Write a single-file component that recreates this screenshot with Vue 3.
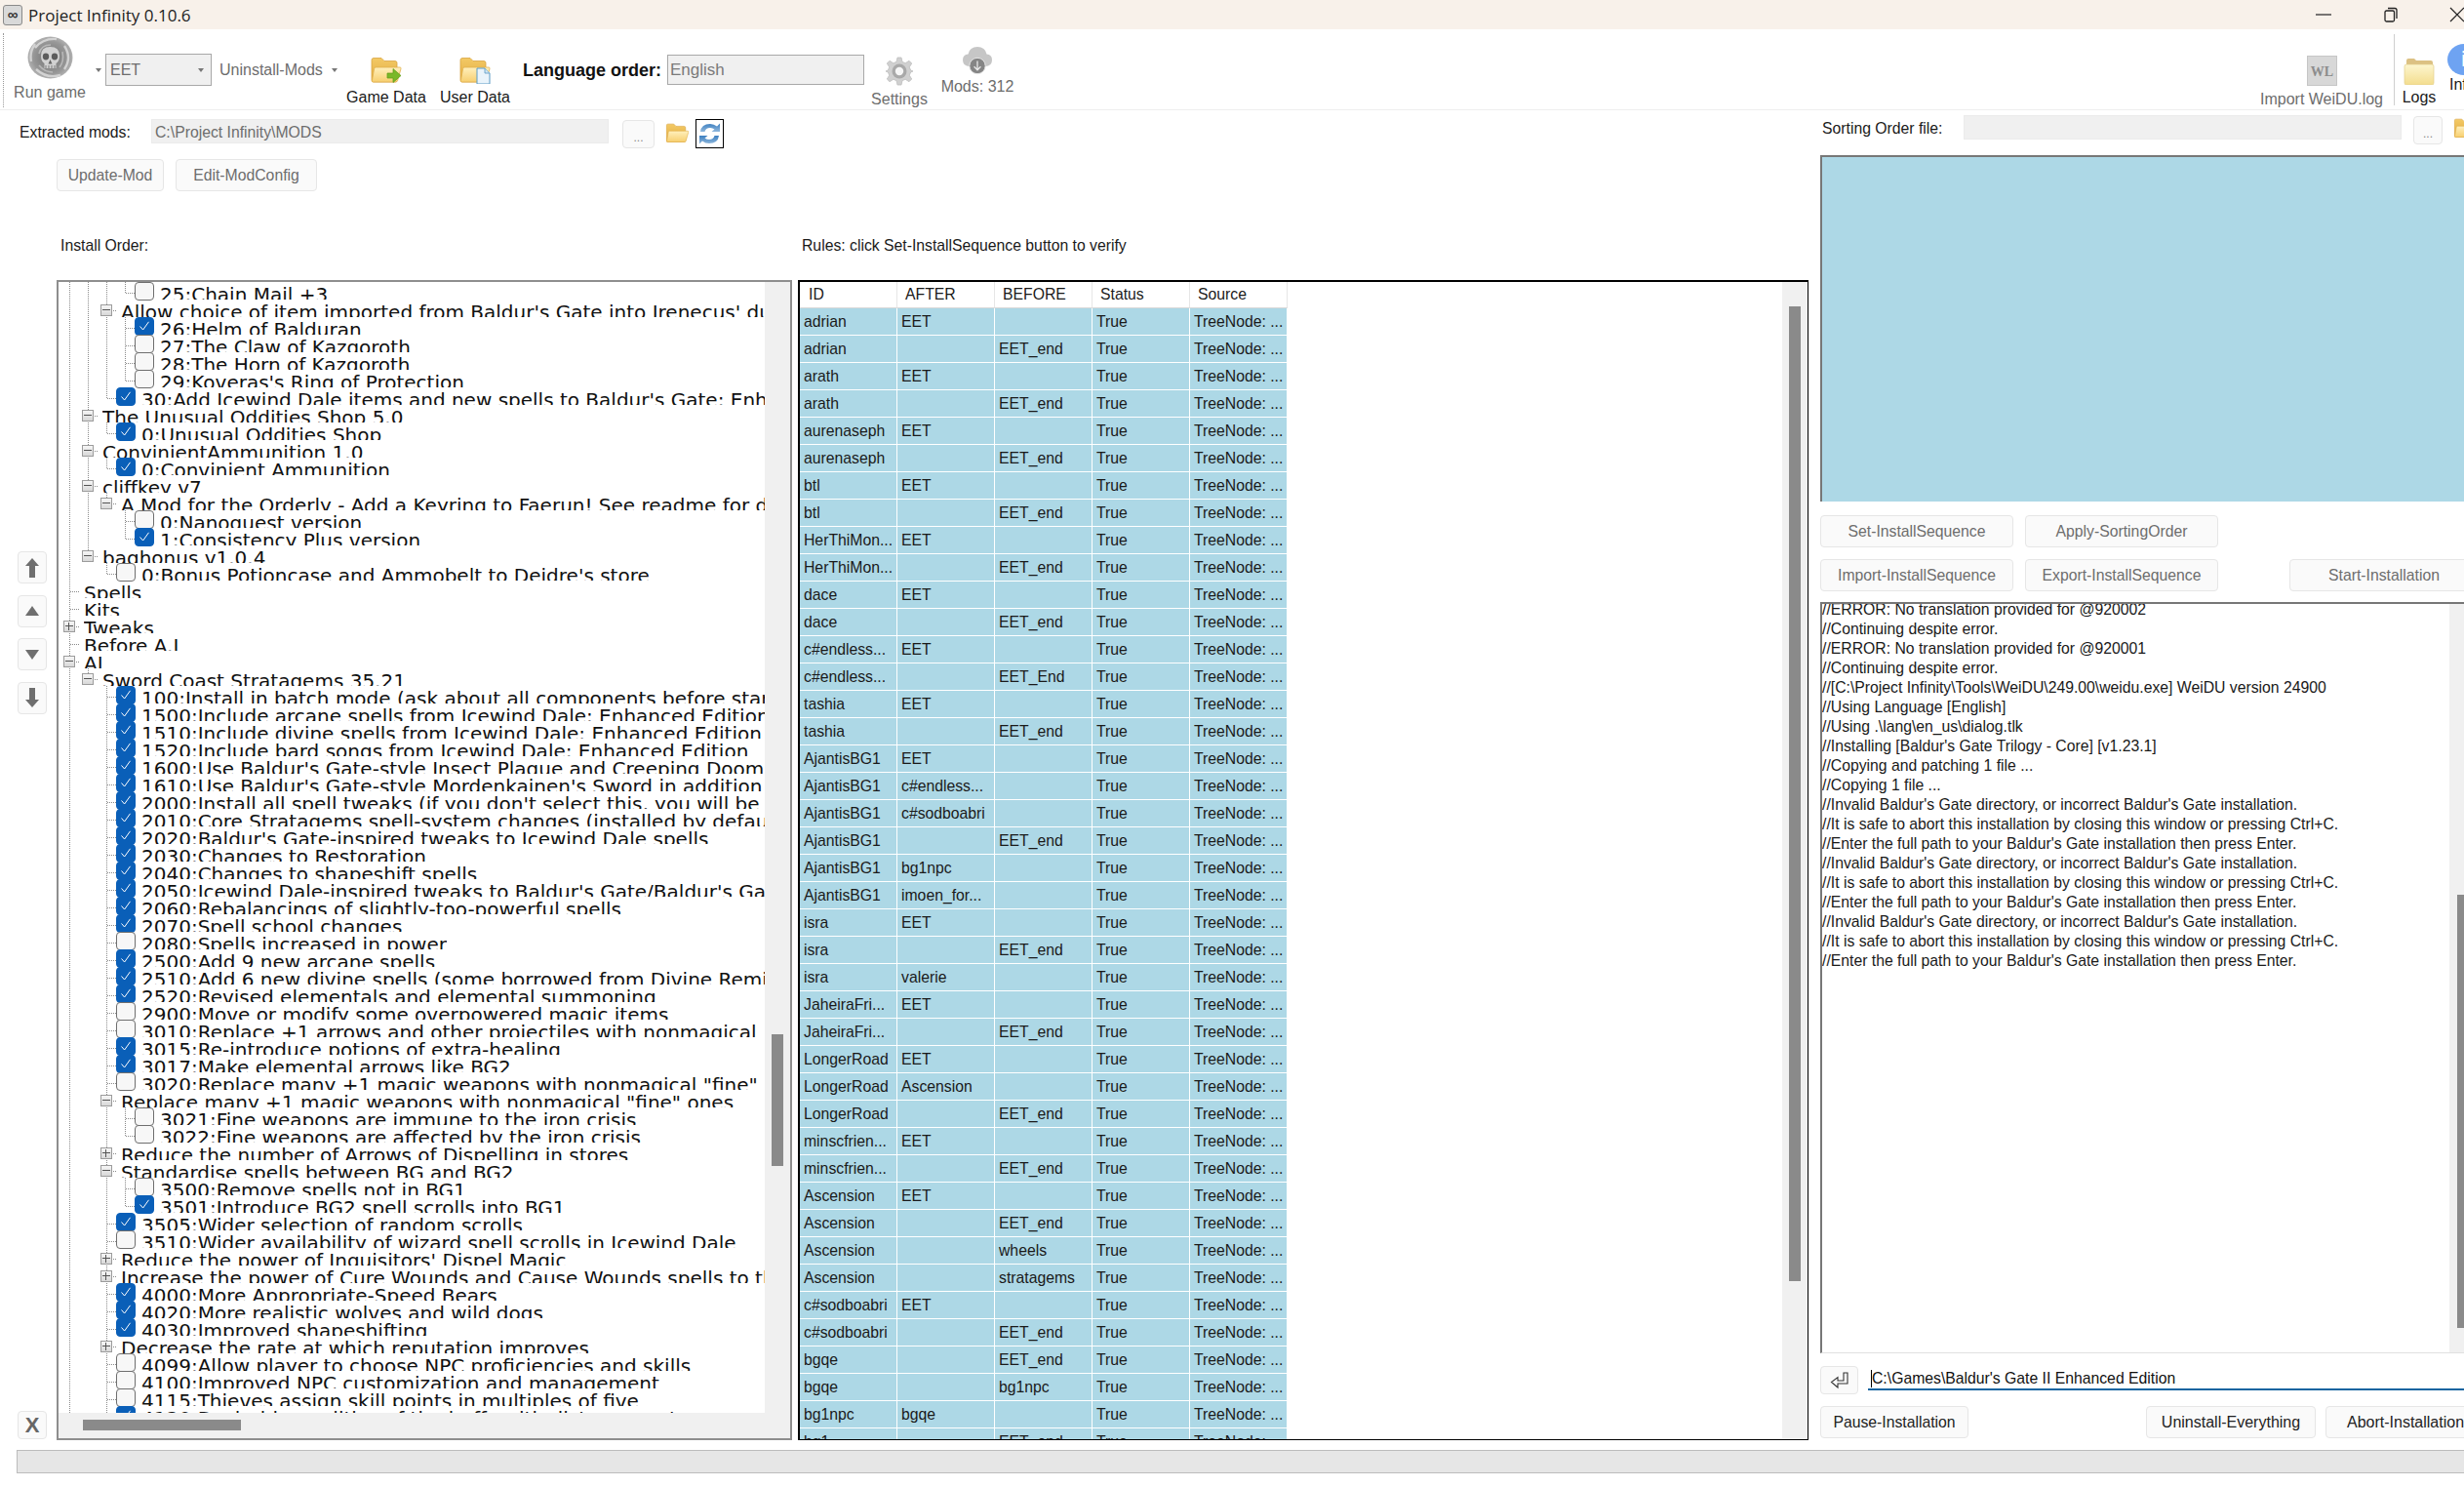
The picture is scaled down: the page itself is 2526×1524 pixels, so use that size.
<template>
  <div class="app">
    <!-- shared icon shapes -->
    <svg class="defs" width="0" height="0">
      <defs>
        <linearGradient id="folderBack" x1="0" y1="0" x2="0" y2="1">
          <stop offset="0" stop-color="#f3c965" />
          <stop offset="1" stop-color="#e2ab3f" />
        </linearGradient>
        <linearGradient id="folderFront" x1="0" y1="0" x2="0" y2="1">
          <stop offset="0" stop-color="#fff0bd" />
          <stop offset="1" stop-color="#f7cf6f" />
        </linearGradient>
        <linearGradient id="folderPale" x1="0" y1="0" x2="0" y2="1">
          <stop offset="0" stop-color="#fdf6cf" />
          <stop offset="1" stop-color="#f3dd8e" />
        </linearGradient>
        <linearGradient id="refreshBlue" x1="0" y1="0" x2="0" y2="1">
          <stop offset="0" stop-color="#3c7fc0" />
          <stop offset="1" stop-color="#8fb7dc" />
        </linearGradient>
        <radialGradient id="skullBg" cx="0.5" cy="0.5" r="0.55">
          <stop offset="0" stop-color="#6f6f6f" />
          <stop offset="0.7" stop-color="#989898" />
          <stop offset="1" stop-color="#bcbcbc" />
        </radialGradient>
        <symbol id="folder" viewBox="0 0 32 28">
          <path d="M1 3.5 Q1 1.5 3 1.5 H11 L14 4.5 H25 Q27 4.5 27 6.5 V24 Q27 26 25 26 H3 Q1 26 1 24 Z" fill="url(#folderBack)" stroke="#d9a541" stroke-width="0.8" />
          <path d="M5 11 H30 Q31.4 11 31 12.5 L27.6 24.5 Q27.2 26 25.6 26 H2.4 Q1 26 1.4 24.5 L3.6 12.5 Q3.8 11 5 11 Z" fill="url(#folderFront)" stroke="#e0b04e" stroke-width="0.8" />
        </symbol>
      </defs>
    </svg>

    <!-- title bar -->
    <div class="title-bar">
      <span class="app-icon">∞</span>
      <span class="title-text">Project Infinity 0.10.6</span>
      <div class="window-controls">
        <svg class="win-min" width="16" height="2" viewBox="0 0 16 2"><path d="M0 1 H16" stroke="#222" stroke-width="1.2" /></svg>
        <svg class="win-max" width="16" height="16" viewBox="0 0 16 16" fill="none" stroke="#222" stroke-width="1.3">
          <rect x="2" y="4" width="9.5" height="11" rx="1.5" />
          <path d="M5 1.5 H12 Q14 1.5 14 3.5 V12" />
        </svg>
        <svg class="win-close" width="16" height="16" viewBox="0 0 16 16"><path d="M1 1 L15 15 M15 1 L1 15" stroke="#222" stroke-width="1.2" /></svg>
      </div>
    </div>

    <!-- toolbar -->
    <div class="toolbar">
      <div class="grip"></div>
      <div class="tool run-game">
        <svg width="47" height="44" viewBox="0 0 47 44">
          <ellipse cx="23.5" cy="22" rx="23" ry="21.5" fill="url(#skullBg)" />
          <path d="M8 12 Q16 2 30 3 M38 10 Q46 22 38 34 M34 40 Q20 44 9 34 M4 26 Q2 16 8 8" fill="none" stroke="#d2d2d2" stroke-width="2.4" />
          <path d="M12 18 Q14 9 24 9 M36 16 Q38 26 33 32 M12 30 Q18 37 26 37" fill="none" stroke="#b8b8b8" stroke-width="1.6" />
          <path d="M14 20 Q14 11 23.5 11 Q33 11 33 20 Q33 26 29.5 28 V33 H17.5 V28 Q14 26 14 20 Z" fill="#d2d2d2" />
          <ellipse cx="19" cy="21" rx="3.2" ry="3.4" fill="#5c5c5c" />
          <ellipse cx="28" cy="21" rx="3.2" ry="3.4" fill="#5c5c5c" />
          <path d="M23.5 24 L21.5 28.5 H25.5 Z" fill="#666" />
          <path d="M19 30 V33 M22 30 V33 M25 30 V33 M28 30 V33" stroke="#7a7a7a" stroke-width="1" />
        </svg>
        <span class="tool-label dim">Run game</span>
      </div>
      <span class="caret caret-run"></span>
      <div class="combo">
        <span>EET</span>
        <span class="caret caret-combo"></span>
      </div>
      <span class="uninstall dim">Uninstall-Mods</span>
      <span class="caret caret-uninstall"></span>

      <div class="tool game-data">
        <svg width="32" height="28" viewBox="0 0 32 28">
          <use href="#folder" />
          <path d="M17 17 H23 V12.5 L31 19.5 L23 26.5 V22 H17 Z" fill="#7ab828" stroke="#5c9a16" stroke-width="0.7" />
        </svg>
        <span class="tool-label">Game Data</span>
      </div>
      <div class="tool user-data">
        <svg width="32" height="28" viewBox="0 0 32 28">
          <use href="#folder" />
          <path d="M18 12 H26 L31 17 V28 H18 Z" fill="#eaf4fb" stroke="#5b9ac4" stroke-width="1" />
          <path d="M26 12 V17 H31" fill="#cfe4f2" stroke="#5b9ac4" stroke-width="0.8" />
        </svg>
        <span class="tool-label">User Data</span>
      </div>

      <span class="lang-label">Language order:</span>
      <div class="lang-input">English</div>

      <div class="tool settings">
        <svg width="30" height="30" viewBox="0 0 30 30">
          <path d="M13 1 H17 L18 5.4 L21.2 6.7 L25 4.3 L27.7 7 L25.3 10.8 L26.6 14 L29 15 L26.6 16 L25.3 19.2 L27.7 23 L25 25.7 L21.2 23.3 L18 24.6 L17 29 H13 L12 24.6 L8.8 23.3 L5 25.7 L2.3 23 L4.7 19.2 L3.4 16 L1 15 L3.4 14 L4.7 10.8 L2.3 7 L5 4.3 L8.8 6.7 L12 5.4 Z" fill="#d0d0d0" stroke="#bdbdbd" stroke-width="0.8" />
          <circle cx="15" cy="15" r="7.5" fill="#a9a9a9" />
          <circle cx="15" cy="15" r="4.2" fill="#f6f6f6" />
        </svg>
        <span class="tool-label dim">Settings</span>
      </div>
      <div class="tool mods-count">
        <svg width="32" height="30" viewBox="0 0 32 30">
          <path d="M8 21 Q1 21 1 14.5 Q1 9 6.5 8.5 Q8 1 16 1 Q24 1 25.5 8.5 Q31 9 31 14.5 Q31 21 24 21 Z" fill="#c6c6c6" />
          <circle cx="16" cy="20.5" r="8.2" fill="#858585" stroke="#e8e8e8" stroke-width="1" />
          <path d="M16 15.5 V24.5 M12.6 21.2 L16 24.8 L19.4 21.2" fill="none" stroke="#e8e8e8" stroke-width="1.3" />
        </svg>
        <span class="tool-label dim">Mods: 312</span>
      </div>

      <div class="tool import-log">
        <svg width="31" height="31" viewBox="0 0 31 31">
          <rect x="0.5" y="0.5" width="30" height="30" fill="#d8d8d8" stroke="#c6c6c6" />
          <text x="15.5" y="21" text-anchor="middle" class="wl-text">WL</text>
        </svg>
        <span class="tool-label dim">Import WeiDU.log</span>
      </div>
      <div class="tool-sep"></div>
      <div class="tool logs">
        <svg width="32" height="28" viewBox="0 0 32 28">
          <path d="M3 6 V3 Q3 1 5 1 H11 L13 3 H28 Q30 3 30 5 V8 H3 Z" fill="#dcc183" />
          <rect x="1" y="7" width="30" height="21" rx="2" fill="url(#folderPale)" stroke="#e3cf8d" stroke-width="0.7" />
        </svg>
        <span class="tool-label solid">Logs</span>
      </div>
      <div class="tool info">
        <span class="info-dot">i</span>
        <span class="tool-label solid">Info</span>
      </div>
    </div>

    <div class="main">
      <!-- left part -->
      <div class="left">
        <div class="path-row">
          <label class="path-label">Extracted mods:</label>
          <div class="path-input">C:\Project Infinity\MODS</div>
          <button class="btn dots">...</button>
          <svg class="path-folder" width="25" height="21" viewBox="0 0 32 28"><use href="#folder" /></svg>
          <div class="refresh">
            <svg width="25" height="26" viewBox="0 0 25 26">
              <path d="M3 11 Q4 3 13 3 Q17 3 20 5.5 L23 2.5 V11 H14.5 L17.5 8.5 Q15.5 7 13 7 Q8.5 7 7.5 11 Z" fill="url(#refreshBlue)" />
              <path d="M22 15 Q21 23 12 23 Q8 23 5 20.5 L2 23.5 V15 H10.5 L7.5 17.5 Q9.5 19 12 19 Q16.5 19 17.5 15 Z" fill="url(#refreshBlue)" />
            </svg>
          </div>
        </div>

        <div class="mod-buttons">
          <button class="btn dim update-mod">Update-Mod</button>
          <button class="btn dim edit-config">Edit-ModConfig</button>
        </div>

        <div class="panel-labels">
          <span class="order-label">Install Order:</span>
          <span>Rules: click Set-InstallSequence button to verify</span>
        </div>

        <div class="panels">
          <div class="side-buttons">
            <button class="btn side">
              <svg width="16" height="22" viewBox="0 0 16 22"><path d="M8 1 L15 9 H11 V21 H5 V9 H1 Z" fill="#6f6f6f" /></svg>
            </button>
            <button class="btn side">
              <svg width="16" height="12" viewBox="0 0 16 12"><path d="M8 1 L15 11 H1 Z" fill="#6f6f6f" /></svg>
            </button>
            <button class="btn side">
              <svg width="16" height="12" viewBox="0 0 16 12"><path d="M8 11 L15 1 H1 Z" fill="#6f6f6f" /></svg>
            </button>
            <button class="btn side">
              <svg width="16" height="22" viewBox="0 0 16 22"><path d="M8 21 L15 13 H11 V1 H5 V13 H1 Z" fill="#6f6f6f" /></svg>
            </button>
            <button class="btn side clear">X</button>
          </div>

          <!-- install order tree -->
          <div class="tree-panel">
            <div class="tree-view">
              <div v-for="(row, i) in treeRows" :key="i" class="tree-row">
                <span
                  v-for="(on, c) in row.guides"
                  :key="c"
                  class="indent"
                  :class="{ 'indent--line': on }"
                ></span>
                <span class="node" :class="{ 'node--more': row.more, 'node--open': row.box }">
                  <span v-if="row.box" class="expander" :class="{ 'expander--plus': row.box === '+' }"></span>
                </span>
                <span v-if="row.check !== null" class="check" :class="{ 'check--on': row.check }">
                  <svg v-if="row.check" width="12" height="12" viewBox="0 0 12 12"><path d="M1.5 6.5 L4.6 10 L10.5 1.8" fill="none" stroke="#fff" stroke-width="1" /></svg>
                </span>
                <span class="node-text" :class="{ 'node-text--check': row.check !== null }">{{ row.text }}</span>
              </div>
            </div>
            <div class="scroll-v tree-scroll"><div class="thumb-v"></div></div>
            <div class="scroll-h"><div class="thumb-h"></div></div>
            <div class="scroll-corner"></div>
          </div>

          <!-- rules table -->
          <div class="rules-panel">
            <div class="rules-view">
              <table class="rules-table">
                <thead>
                  <tr>
                    <th v-for="h in ruleHeaders" :key="h">{{ h }}</th>
                  </tr>
                </thead>
                <tbody>
                  <tr v-for="(r, i) in ruleRows" :key="i">
                    <td>{{ r[0] }}</td>
                    <td>{{ r[1] }}</td>
                    <td>{{ r[2] }}</td>
                    <td>True</td>
                    <td>TreeNode: ...</td>
                  </tr>
                </tbody>
              </table>
            </div>
            <div class="scroll-v rules-scroll"><div class="thumb-v"></div></div>
          </div>
        </div>
      </div>

      <!-- right part -->
      <div class="right">
        <div class="sort-row">
          <label class="sort-label">Sorting Order file:</label>
          <div class="sort-input"></div>
          <button class="btn dots">...</button>
          <svg class="sort-folder" width="25" height="21" viewBox="0 0 32 28"><use href="#folder" /></svg>
        </div>

        <div class="preview"></div>

        <div class="seq-row">
          <button class="btn dim seq">Set-InstallSequence</button>
          <button class="btn dim seq">Apply-SortingOrder</button>
        </div>
        <div class="seq-row seq-row--second">
          <button class="btn dim seq">Import-InstallSequence</button>
          <button class="btn dim seq">Export-InstallSequence</button>
          <button class="btn dim seq start">Start-Installation</button>
        </div>

        <div class="log-box">
          <div class="log-view">
            <div v-for="(line, i) in logLines" :key="i" class="log-line">{{ line }}</div>
          </div>
          <div class="scroll-v log-scroll"><div class="thumb-v"></div></div>
        </div>

        <div class="input-row">
          <button class="btn enter">
            <svg width="20" height="20" viewBox="0 0 20 20">
              <path d="M14 2 H18 V13 H8 V17 L1.5 11.5 L8 6.5 V10 H14 Z" fill="none" stroke="#333" stroke-width="1.1" />
            </svg>
          </button>
          <div class="console-input"><span class="text-caret"></span>C:\Games\Baldur's Gate II Enhanced Edition</div>
        </div>

        <div class="action-row">
          <button class="btn pause">Pause-Installation</button>
          <button class="btn wide uninstall-all">Uninstall-Everything</button>
          <button class="btn wide abort">Abort-Installation</button>
        </div>
      </div>
    </div>

    <div class="status-bar"></div>
  </div>
</template>

<script setup>
import { computed } from 'vue'

// level, box ('+', '-', ''), check (true, false, null), text
const treeData = [
  [3, '', false, '25:Chain Mail +3'],
  [2, '-', null, "Allow choice of item imported from Baldur's Gate into Irenecus' dungeon"],
  [3, '', true, '26:Helm of Balduran'],
  [3, '', false, '27:The Claw of Kazgoroth'],
  [3, '', false, '28:The Horn of Kazgoroth'],
  [3, '', false, "29:Koveras's Ring of Protection"],
  [2, '', true, "30:Add Icewind Dale items and new spells to Baldur's Gate: Enhanced Edition"],
  [1, '-', null, 'The Unusual Oddities Shop 5.0'],
  [2, '', true, '0:Unusual Oddities Shop'],
  [1, '-', null, 'ConvinientAmmunition 1.0'],
  [2, '', true, '0:Convinient Ammunition'],
  [1, '-', null, 'cliffkey v7'],
  [2, '-', null, 'A Mod for the Orderly - Add a Keyring to Faerun! See readme for details'],
  [3, '', false, '0:Nanoquest version'],
  [3, '', true, '1:Consistency Plus version'],
  [1, '-', null, 'baghonus v1.0.4'],
  [2, '', false, "0:Bonus Potioncase and Ammobelt to Deidre's store"],
  [0, '', null, 'Spells'],
  [0, '', null, 'Kits'],
  [0, '+', null, 'Tweaks'],
  [0, '', null, 'Before A.I'],
  [0, '-', null, 'AI'],
  [1, '-', null, 'Sword Coast Stratagems 35.21'],
  [2, '', true, '100:Install in batch mode (ask about all components before starting)'],
  [2, '', true, '1500:Include arcane spells from Icewind Dale: Enhanced Edition'],
  [2, '', true, '1510:Include divine spells from Icewind Dale: Enhanced Edition'],
  [2, '', true, '1520:Include bard songs from Icewind Dale: Enhanced Edition'],
  [2, '', true, "1600:Use Baldur's Gate-style Insect Plague and Creeping Doom"],
  [2, '', true, "1610:Use Baldur's Gate-style Mordenkainen's Sword in addition"],
  [2, '', true, "2000:Install all spell tweaks (if you don't select this, you will be asked"],
  [2, '', true, '2010:Core Stratagems spell-system changes (installed by default)'],
  [2, '', true, "2020:Baldur's Gate-inspired tweaks to Icewind Dale spells"],
  [2, '', true, '2030:Changes to Restoration'],
  [2, '', true, '2040:Changes to shapeshift spells'],
  [2, '', true, "2050:Icewind Dale-inspired tweaks to Baldur's Gate/Baldur's Gate II spells"],
  [2, '', true, '2060:Rebalancings of slightly-too-powerful spells'],
  [2, '', true, '2070:Spell school changes'],
  [2, '', false, '2080:Spells increased in power'],
  [2, '', true, '2500:Add 9 new arcane spells'],
  [2, '', true, '2510:Add 6 new divine spells (some borrowed from Divine Remix)'],
  [2, '', true, '2520:Revised elementals and elemental summoning'],
  [2, '', false, '2900:Move or modify some overpowered magic items'],
  [2, '', false, '3010:Replace +1 arrows and other projectiles with nonmagical'],
  [2, '', true, '3015:Re-introduce potions of extra-healing'],
  [2, '', true, '3017:Make elemental arrows like BG2'],
  [2, '', false, '3020:Replace many +1 magic weapons with nonmagical "fine"'],
  [2, '-', null, 'Replace many +1 magic weapons with nonmagical "fine" ones'],
  [3, '', false, '3021:Fine weapons are immune to the iron crisis'],
  [3, '', false, '3022:Fine weapons are affected by the iron crisis'],
  [2, '+', null, 'Reduce the number of Arrows of Dispelling in stores'],
  [2, '-', null, 'Standardise spells between BG and BG2'],
  [3, '', false, '3500:Remove spells not in BG1'],
  [3, '', true, '3501:Introduce BG2 spell scrolls into BG1'],
  [2, '', true, '3505:Wider selection of random scrolls'],
  [2, '', false, '3510:Wider availability of wizard spell scrolls in Icewind Dale'],
  [2, '+', null, "Reduce the power of Inquisitors' Dispel Magic"],
  [2, '+', null, 'Increase the power of Cure Wounds and Cause Wounds spells to the'],
  [2, '', true, '4000:More Appropriate-Speed Bears'],
  [2, '', true, '4020:More realistic wolves and wild dogs'],
  [2, '', true, '4030:Improved shapeshifting'],
  [2, '+', null, 'Decrease the rate at which reputation improves'],
  [2, '', false, '4099:Allow player to choose NPC proficiencies and skills'],
  [2, '', false, '4100:Improved NPC customization and management'],
  [2, '', false, '4115:Thieves assign skill points in multiples of five'],
  [2, '', true, '4120:Desirable qualities of the buffs with distance restr'],
  [2, '', false, '4130:More sensible NPC'],
  [0, '', null, 'After A.I']
]

// a column keeps its dotted line while a later sibling is still to come
const hasSiblingBelow = (index, level) => {
  for (let j = index + 1; j < treeData.length; j++) {
    if (treeData[j][0] <= level) return treeData[j][0] === level
  }
  return false
}

const treeRows = computed(() => treeData.map((row, i) => {
  const [level, box, check, text] = row
  const guides = []
  for (let c = 0; c < level; c++) guides.push(hasSiblingBelow(i, c))
  return { level, box, check, text, guides, more: hasSiblingBelow(i, level) }
}))

const ruleHeaders = ['ID', 'AFTER', 'BEFORE', 'Status', 'Source']

const ruleRows = [
  ['adrian', 'EET', ''],
  ['adrian', '', 'EET_end'],
  ['arath', 'EET', ''],
  ['arath', '', 'EET_end'],
  ['aurenaseph', 'EET', ''],
  ['aurenaseph', '', 'EET_end'],
  ['btl', 'EET', ''],
  ['btl', '', 'EET_end'],
  ['HerThiMon...', 'EET', ''],
  ['HerThiMon...', '', 'EET_end'],
  ['dace', 'EET', ''],
  ['dace', '', 'EET_end'],
  ['c#endless...', 'EET', ''],
  ['c#endless...', '', 'EET_End'],
  ['tashia', 'EET', ''],
  ['tashia', '', 'EET_end'],
  ['AjantisBG1', 'EET', ''],
  ['AjantisBG1', 'c#endless...', ''],
  ['AjantisBG1', 'c#sodboabri', ''],
  ['AjantisBG1', '', 'EET_end'],
  ['AjantisBG1', 'bg1npc', ''],
  ['AjantisBG1', 'imoen_for...', ''],
  ['isra', 'EET', ''],
  ['isra', '', 'EET_end'],
  ['isra', 'valerie', ''],
  ['JaheiraFri...', 'EET', ''],
  ['JaheiraFri...', '', 'EET_end'],
  ['LongerRoad', 'EET', ''],
  ['LongerRoad', 'Ascension', ''],
  ['LongerRoad', '', 'EET_end'],
  ['minscfrien...', 'EET', ''],
  ['minscfrien...', '', 'EET_end'],
  ['Ascension', 'EET', ''],
  ['Ascension', '', 'EET_end'],
  ['Ascension', '', 'wheels'],
  ['Ascension', '', 'stratagems'],
  ['c#sodboabri', 'EET', ''],
  ['c#sodboabri', '', 'EET_end'],
  ['bgqe', '', 'EET_end'],
  ['bgqe', '', 'bg1npc'],
  ['bg1npc', 'bgqe', ''],
  ['bg1', '', 'EET_end']
]

const logLines = [
  '//ERROR: No translation provided for @920002',
  '//Continuing despite error.',
  '//ERROR: No translation provided for @920001',
  '//Continuing despite error.',
  '//[C:\\Project Infinity\\Tools\\WeiDU\\249.00\\weidu.exe] WeiDU version 24900',
  '//Using Language [English]',
  '//Using .\\lang\\en_us\\dialog.tlk',
  "//Installing [Baldur's Gate Trilogy - Core] [v1.23.1]",
  '//Copying and patching 1 file ...',
  '//Copying 1 file ...',
  "//Invalid Baldur's Gate directory, or incorrect Baldur's Gate installation.",
  '//It is safe to abort this installation by closing this window or pressing Ctrl+C.',
  "//Enter the full path to your Baldur's Gate installation then press Enter.",
  "//Invalid Baldur's Gate directory, or incorrect Baldur's Gate installation.",
  '//It is safe to abort this installation by closing this window or pressing Ctrl+C.',
  "//Enter the full path to your Baldur's Gate installation then press Enter.",
  "//Invalid Baldur's Gate directory, or incorrect Baldur's Gate installation.",
  '//It is safe to abort this installation by closing this window or pressing Ctrl+C.',
  "//Enter the full path to your Baldur's Gate installation then press Enter."
]
</script>

<style>
html, body {
  margin: 0;
  background: #fff;
}
</style>

<style scoped>
.app {
  width: 2526px;
  height: 1524px;
  overflow: hidden;
  display: flex;
  flex-direction: column;
  background: #fff;
  color: #1a1a1a;
  font-family: 'Liberation Sans', Arial, sans-serif;
  font-size: 15.75px;
}

.defs {
  position: absolute;
}

.dim {
  color: #6d6d6d;
}

/* title bar */
.title-bar {
  height: 30px;
  flex-shrink: 0;
  display: flex;
  align-items: center;
  background: #f8f1ea;
}

.app-icon {
  width: 18px;
  height: 19px;
  margin-left: 3px;
  border: 1px solid #8a8a8a;
  border-radius: 3px;
  background: #d9d9d9;
  color: #333;
  font-size: 15px;
  line-height: 18px;
  text-align: center;
  font-weight: bold;
}

.title-text {
  margin-left: 6px;
  font-family: 'Open Sans', sans-serif;
  font-size: 17px;
  color: #222;
}

.window-controls {
  margin-left: auto;
  display: flex;
  align-items: center;
}

.win-min {
  margin-right: 53px;
}

.win-max {
  margin-right: 52px;
}

.win-close {
  margin-right: -1px;
}

/* toolbar */
.toolbar {
  height: 82px;
  flex-shrink: 0;
  display: flex;
  align-items: flex-start;
  border-bottom: 1px solid #eeeeee;
  white-space: nowrap;
  font-size: 16px;
}

.toolbar > * {
  flex-shrink: 0;
}

.grip {
  height: 76px;
  margin: 4px 0 0 3px;
  border-left: 1px dotted #999;
}

.tool {
  display: flex;
  flex-direction: column;
  align-items: center;
}

.tool-label {
  line-height: 20px;
}

.tool-label.solid {
  color: #1a1a1a;
}

.run-game {
  width: 60px;
  margin: 7px 0 0 17px;
}

.run-game .tool-label {
  margin-top: 4px;
}

.caret {
  width: 0;
  height: 0;
  border-left: 3px solid transparent;
  border-right: 3px solid transparent;
  border-top: 4px solid #777;
}

.caret-run {
  margin: 40px 0 0 17px;
}

.combo {
  width: 109px;
  height: 33px;
  margin: 25px 0 0 4px;
  box-sizing: border-box;
  padding-left: 4px;
  display: flex;
  align-items: center;
  justify-content: space-between;
  background: #f0f0f0;
  border: 1px solid #a8a8a8;
  color: #6d6d6d;
}

.caret-combo {
  margin-right: 7px;
}

.uninstall {
  width: 105px;
  margin: 32px 0 0 8px;
  line-height: 20px;
}

.caret-uninstall {
  margin: 40px 0 0 10px;
}

.game-data {
  width: 84px;
  margin: 28px 0 0 8px;
}

.game-data .tool-label,
.user-data .tool-label,
.settings .tool-label,
.import-log .tool-label,
.logs .tool-label {
  margin-top: 4px;
}

.user-data {
  width: 76px;
  margin: 28px 0 0 11px;
}

.lang-label {
  width: 140px;
  margin: 31px 0 0 11px;
  font-weight: bold;
  font-size: 18px;
  line-height: 22px;
  color: #111;
}

.lang-input {
  width: 202px;
  height: 31px;
  margin: 26px 0 0 8px;
  box-sizing: border-box;
  padding-left: 2px;
  background: #f0f0f0;
  border: 1px solid #a8a8a8;
  color: #7a7a7a;
  font-size: 17px;
  line-height: 29px;
}

.settings {
  width: 64px;
  margin: 28px 0 0 4px;
}

.mods-count {
  width: 76px;
  margin: 17px 0 0 10px;
}

.mods-count .tool-label {
  margin-top: 2px;
}

.import-log {
  width: 130px;
  margin: 27px 0 0 1275px;
}

.wl-text {
  font-family: 'Liberation Serif', serif;
  font-weight: bold;
  font-size: 14px;
  fill: #8c8c8c;
}

.tool-sep {
  width: 1px;
  height: 73px;
  margin: 5px 0 0 9px;
  background: #cfcfcf;
}

.logs {
  width: 44px;
  margin: 29px 0 0 3px;
}

.logs .tool-label {
  margin-top: 3px;
}

.info {
  width: 34px;
  margin: 15px 0 0 7px;
  align-items: flex-start;
}

.info-dot {
  width: 34px;
  height: 32px;
  border-radius: 50%;
  background: #6ea3f2;
  color: #fff;
  font-size: 22px;
  line-height: 32px;
  text-align: center;
  font-weight: bold;
}

.info .tool-label {
  margin: 0 0 0 2px;
}

/* main */
.main {
  height: 1363px;
  flex-shrink: 0;
  display: flex;
}

.left {
  width: 1866px;
  flex-shrink: 0;
}

.right {
  width: 660px;
  flex-shrink: 0;
}

.btn {
  box-sizing: border-box;
  height: 33px;
  padding: 0;
  flex-shrink: 0;
  background: #fafafa;
  border: 1px solid #e6e6e6;
  border-radius: 4px;
  font-family: inherit;
  font-size: 15.75px;
  color: #222;
  text-align: center;
}

.btn.dim {
  color: #6d6d6d;
}

.dots {
  width: 33px;
  height: 29px;
  padding-top: 6px;
  font-size: 12px;
  color: #888;
}

.path-row {
  height: 30px;
  margin-top: 9px;
  padding-left: 20px;
  display: flex;
  align-items: flex-start;
}

.path-label {
  width: 135px;
  line-height: 27px;
  color: #1a1a1a;
}

.path-input {
  width: 469px;
  height: 25px;
  padding-left: 3px;
  box-sizing: border-box;
  background: #f0f0f0;
  color: #6d6d6d;
  line-height: 25px;
  border: 1px solid #ebebeb;
}

.path-row .dots {
  margin: 1px 0 0 14px;
}

.path-folder {
  margin: 4px 0 0 11px;
}

.refresh {
  width: 29px;
  height: 30px;
  margin-left: 6px;
  box-sizing: border-box;
  display: flex;
  align-items: center;
  justify-content: center;
  border: 1px solid #000;
}

.mod-buttons {
  margin-top: 11px;
  padding-left: 58px;
  display: flex;
  gap: 12px;
}

.update-mod {
  width: 110px;
}

.edit-config {
  width: 145px;
}

.panel-labels {
  height: 20px;
  margin-top: 46px;
  display: flex;
  line-height: 20px;
  padding-left: 62px;
}

.order-label {
  width: 760px;
}

.panels {
  height: 1189px;
  margin-top: 25px;
  padding-left: 18px;
  display: flex;
}

.side-buttons {
  width: 30px;
  padding-top: 278px;
  display: flex;
  flex-direction: column;
  gap: 11.5px;
  box-sizing: border-box;
}

.side {
  width: 30px;
  display: flex;
  align-items: center;
  justify-content: center;
}

.clear {
  height: 29px;
  margin-top: auto;
  margin-bottom: 1px;
  font-size: 22px;
  font-weight: bold;
  color: #666;
}

/* tree */
.tree-panel {
  width: 754px;
  margin-left: 10px;
  box-sizing: border-box;
  border: 2px solid #8e8e8e;
  display: grid;
  grid-template-columns: 1fr 26px;
  grid-template-rows: 1fr 26px;
  min-height: 0;
}

.tree-view {
  padding-left: 2px;
  overflow: hidden;
  min-width: 0;
  min-height: 0;
  font-family: 'DejaVu Sans', sans-serif;
  font-size: 20px;
  color: #111;
}

.tree-row {
  height: 18px;
  display: flex;
  white-space: nowrap;
}

.indent {
  width: 19px;
  flex-shrink: 0;
  box-sizing: border-box;
}

.indent--line {
  background: linear-gradient(#8a8a8a 50%, transparent 50%) 9px 0 / 1px 2px repeat-y;
}

.node {
  width: 19px;
  height: 18px;
  flex-shrink: 0;
  position: relative;
}

.node::before {
  content: '';
  position: absolute;
  left: 9px;
  top: 0;
  width: 1px;
  height: 11px;
  background: linear-gradient(#8a8a8a 50%, transparent 50%) 0 0 / 1px 2px repeat-y;
}

.node--more::before {
  height: 18px;
}

.node::after {
  content: '';
  position: absolute;
  left: 10px;
  top: 11px;
  width: 9px;
  height: 1px;
  background: linear-gradient(90deg, #8a8a8a 50%, transparent 50%) 0 0 / 2px 1px repeat-x;
}

.expander {
  position: absolute;
  left: 3px;
  top: 5px;
  width: 12px;
  height: 12px;
  box-sizing: border-box;
  z-index: 1;
  border: 1px solid #9c9c9c;
  background: linear-gradient(#f6f6f6, #d8d8d8);
}

.expander::before {
  content: '';
  position: absolute;
  left: 1px;
  right: 1px;
  top: 4px;
  height: 1px;
  background: #555;
}

.expander--plus::after {
  content: '';
  position: absolute;
  top: 1px;
  bottom: 1px;
  left: 4px;
  width: 1px;
  background: #555;
}

.check {
  width: 20px;
  height: 19px;
  flex-shrink: 0;
  box-sizing: border-box;
  position: relative;
  z-index: 1;
  display: flex;
  align-items: flex-start;
  justify-content: center;
  padding-top: 2px;
  background: #f7f7f7;
  border: 1px solid #6f6f6f;
  border-radius: 4px;
}

.check--on {
  background: #0a5fb8;
  border-color: #0a5fb8;
}

.node-text {
  display: block;
  height: 18px;
  margin-left: 5px;
  overflow: hidden;
  line-height: 27px;
}

.node-text--check {
  margin-left: 6px;
}

/* scrollbars */
.scroll-v {
  background: #f0f0f0;
  min-height: 0;
}

.thumb-v {
  width: 12px;
  background: #8a8a8a;
}

.tree-scroll .thumb-v {
  height: 135px;
  margin: 771px 0 0 7px;
}

.scroll-h {
  background: #f0f0f0;
  padding: 7px 0 0 25px;
}

.thumb-h {
  width: 162px;
  height: 11px;
  background: #8a8a8a;
}

.scroll-corner {
  background: #f0f0f0;
}

/* rules */
.rules-panel {
  width: 1036px;
  margin-left: 6px;
  box-sizing: border-box;
  border: 1px solid #000;
  border-top-width: 2px;
  border-left-width: 2px;
  display: flex;
  min-height: 0;
}

.rules-view {
  flex: 1;
  min-width: 0;
  overflow: hidden;
}

.rules-table {
  border-collapse: separate;
  border-spacing: 0;
  table-layout: fixed;
  width: 500px;
  color: #1a1a1a;
}

.rules-table th {
  height: 27px;
  box-sizing: border-box;
  padding: 0 0 0 8px;
  background: #fff;
  border-right: 1px solid #e6e6e6;
  border-bottom: 1px solid #d8d8d8;
  text-align: left;
  font-weight: normal;
  font-size: 15.75px;
  width: 100px;
}

.rules-table th:first-child {
  padding-left: 9px;
}

.rules-table td {
  height: 28px;
  box-sizing: border-box;
  padding: 0 0 0 4px;
  background: #add8e6;
  border-right: 1px solid #fff;
  border-bottom: 1px solid #fff;
  white-space: nowrap;
  overflow: hidden;
}

.rules-scroll {
  width: 26px;
  flex-shrink: 0;
}

.rules-scroll .thumb-v {
  height: 999px;
  margin: 25px 0 0 7px;
}

/* right side */
.sort-row {
  height: 29px;
  margin-top: 5px;
  padding-left: 2px;
  display: flex;
  align-items: flex-start;
}

.sort-label {
  width: 145px;
  line-height: 27px;
  flex-shrink: 0;
}

.sort-input {
  width: 449px;
  height: 25px;
  flex-shrink: 0;
  box-sizing: border-box;
  background: #f0f0f0;
  border: 1px solid #ebebeb;
}

.sort-row .dots {
  width: 30px;
  margin: 1px 0 0 12px;
}

.sort-folder {
  margin: 3px 0 0 11px;
  flex-shrink: 0;
}

.preview {
  height: 355px;
  margin-top: 12px;
  box-sizing: border-box;
  background: #add8e6;
  border-top: 2px solid #777;
  border-left: 2px solid #777;
}

.seq-row {
  margin-top: 14px;
  display: flex;
  gap: 12px;
}

.seq-row--second {
  margin-top: 12px;
}

.seq {
  width: 198px;
}

.start {
  margin-left: 61px;
  width: 194px;
}

.log-box {
  height: 770px;
  margin-top: 11px;
  box-sizing: border-box;
  display: flex;
  border-top: 2px solid #777;
  border-left: 2px solid #777;
  border-bottom: 1px solid #e0e0e0;
  overflow: hidden;
}

.log-view {
  flex: 1;
  min-width: 0;
  margin-top: -4px;
  white-space: nowrap;
}

.log-line {
  height: 20px;
  line-height: 20px;
}

.log-scroll {
  width: 15px;
  flex-shrink: 0;
}

.log-scroll .thumb-v {
  width: 7px;
  height: 444px;
  margin: 298px 0 0 8px;
}

.input-row {
  height: 29px;
  margin-top: 13px;
  display: flex;
  gap: 10px;
}

.enter {
  width: 39px;
  height: 29px;
  display: flex;
  align-items: center;
  justify-content: center;
}

.console-input {
  flex: 1;
  height: 25px;
  box-sizing: border-box;
  padding: 2px 0 0 3px;
  display: flex;
  align-items: center;
  border-bottom: 2px solid #1565a0;
  color: #111;
}

.text-caret {
  width: 1px;
  height: 18px;
  background: #000;
}

.action-row {
  margin-top: 12px;
  display: flex;
}

.pause {
  width: 152px;
}

.wide {
  width: 174px;
  font-size: 16px;
}

.abort {
  width: 164px;
}

.uninstall-all {
  margin: 0 10px 0 182px;
}

.status-bar {
  height: 24px;
  flex-shrink: 0;
  margin: 10px 0 0 17px;
  box-sizing: border-box;
  background: #e6e6e6;
  border-top: 1px solid #bcbcbc;
  border-bottom: 1px solid #bcbcbc;
  border-left: 1px solid #bcbcbc;
}
</style>
